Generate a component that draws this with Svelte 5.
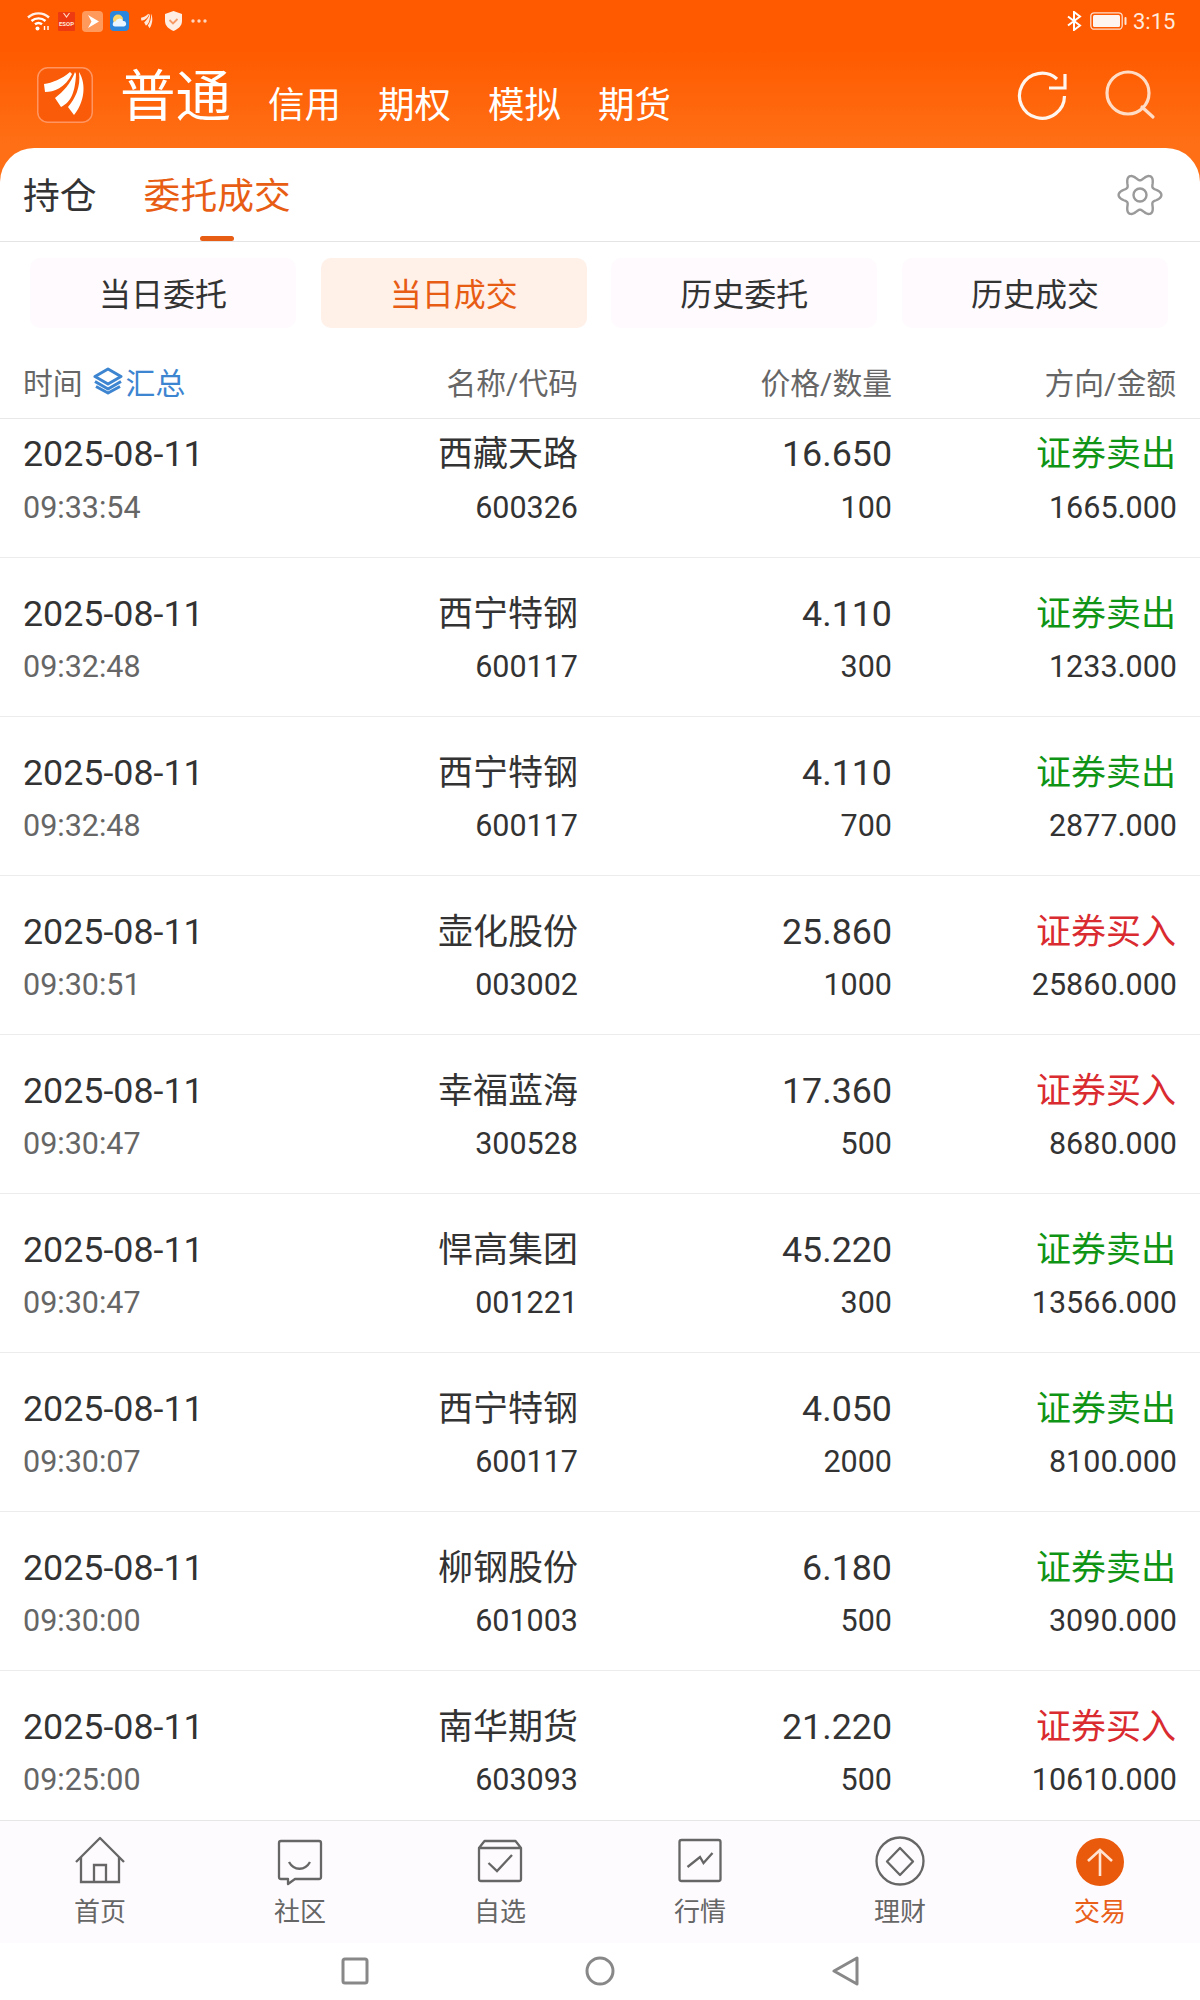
<script>
  const tabs = ['当日委托', '当日成交', '历史委托', '历史成交'];
  const rows = [
    ['09:33:54', '西藏天路', '600326', '16.650', '100', 'sell', '1665.000'],
    ['09:32:48', '西宁特钢', '600117', '4.110', '300', 'sell', '1233.000'],
    ['09:32:48', '西宁特钢', '600117', '4.110', '700', 'sell', '2877.000'],
    ['09:30:51', '壶化股份', '003002', '25.860', '1000', 'buy', '25860.000'],
    ['09:30:47', '幸福蓝海', '300528', '17.360', '500', 'buy', '8680.000'],
    ['09:30:47', '悍高集团', '001221', '45.220', '300', 'sell', '13566.000'],
    ['09:30:07', '西宁特钢', '600117', '4.050', '2000', 'sell', '8100.000'],
    ['09:30:00', '柳钢股份', '601003', '6.180', '500', 'sell', '3090.000'],
    ['09:25:00', '南华期货', '603093', '21.220', '500', 'buy', '10610.000']
  ];
  const navLabels = ['首页', '社区', '自选', '行情', '理财', '交易'];

  // Six-lobed settings gear outline, sampled around its centre.
  const gearPath = Array.from({ length: 120 }, (_, i) => {
    const a = (i / 120) * Math.PI * 2;
    const r = 18 + 3.4 * Math.cos(6 * a);
    const x = 23 + r * Math.cos(a);
    const y = 23 + r * Math.sin(a);
    return (i ? 'L' : 'M') + x.toFixed(2) + ' ' + y.toFixed(2);
  }).join('') + 'Z';
</script>

<div class="page">
  <header class="top">
    <div class="status">
      <div class="status-left">
        <svg width="24" height="20" viewBox="0 0 24 20" fill="none" stroke="#fff" stroke-width="2.4">
          <path d="M1 6.5C7 1 16 1 22 6.5" opacity=".9" />
          <path d="M4.5 10C8.5 6.5 14.5 6.5 18.5 10" />
          <path d="M8 13.3C10 11.7 13 11.7 15 13.3" />
          <circle cx="10.5" cy="17.5" r="2" fill="#fff" stroke="none" />
          <path d="M17.5 15v4M21 15v4" stroke-width="1.4" />
        </svg>
        <svg class="g-esop" width="17" height="20" viewBox="0 0 17 20">
          <rect width="17" height="19" y="1" rx="1" fill="#ee3a10" />
          <path d="M5.5 2L8.5 6l3-4" stroke="#ffd9c0" stroke-width="1.2" fill="none" />
          <text x="8.5" y="15" font-size="6" font-weight="700" text-anchor="middle" fill="#ffe8d8" font-family="Roboto">ESOP</text>
        </svg>
        <svg class="g-play" width="21" height="21" viewBox="0 0 21 21">
          <rect width="21" height="21" rx="4" fill="#ff9a5c" />
          <path d="M6 4l11 6.500L6 17l3.500-6.500z" fill="#fff" />
        </svg>
        <svg class="g-wx" width="19" height="20" viewBox="0 0 19 20">
          <rect width="19" height="20" rx="4" fill="#2c86dc" />
          <circle cx="8" cy="8.5" r="5" fill="#ffd768" />
          <path d="M5 15.5a2.500 2.500 0 0 1 .5-5 4 4 0 0 1 7.500-.5 2.800 2.800 0 0 1 1 5.500z" fill="#eaf5ff" />
        </svg>
        <svg class="g-leaf" width="16" height="19" viewBox="0 0 56 56" preserveAspectRatio="none" fill="#ffe8da">
          <path d="M33 5C25 12 15 16 7 17L8 25C17 25 28 21 35 7z" />
          <path d="M38 5C34 16 26 25 18 31L24 40C32 36 38 29 39 7z" />
          <path d="M42 5C50 18 47 36 37 48L31 40C38 32 44 20 42 5z" />
        </svg>
        <svg class="g-shield" width="17" height="20" viewBox="0 0 17 20">
          <path d="M8.5 0L17 3v7c0 5-4 8-8.500 10C4 18 0 15 0 10V3z" fill="#ffeee4" />
          <path d="M4.500 9L8 12.500l4.500-4.500" fill="none" stroke="#f59a66" stroke-width="1.8" />
        </svg>
        <svg class="g-dots" width="16" height="4" viewBox="0 0 16 4" fill="#fff" opacity=".75">
          <circle cx="2" cy="2" r="1.7" /><circle cx="8" cy="2" r="1.7" /><circle cx="14" cy="2" r="1.7" />
        </svg>
      </div>
      <div class="status-right">
        <svg width="15" height="20" viewBox="0 0 15 20" fill="none" stroke="#fff" stroke-width="2">
          <path d="M1 5.500l12 9-6 4.500V1l6 4.500-12 9" />
        </svg>
        <svg class="battery" width="37" height="18" viewBox="0 0 37 18">
          <rect x=".8" y=".8" width="31.4" height="16.4" rx="3.5" fill="none" stroke="#fff" stroke-width="1.3" opacity=".8" />
          <rect x="3" y="3" width="27" height="12" rx="1.5" fill="#fff5f0" />
          <rect x="34.5" y="5" width="2" height="8" rx="1" fill="#fff" opacity=".85" />
        </svg>
        <span class="clock">3:15</span>
      </div>
    </div>
    <div class="brand">
      <svg class="logo" width="56" height="56" viewBox="0 0 56 56">
        <rect x=".75" y=".75" width="54.5" height="54.5" rx="10" fill="#f95b08" stroke="#ff9560" stroke-width="1.5" />
        <path d="M33 5C25 12 15 16 7 17L8 25C17 25 28 21 35 7z" fill="#fff" />
        <path d="M38 5C34 16 26 25 18 31L24 40C32 36 38 29 39 7z" fill="#fff" />
        <path d="M42 5C50 18 47 36 37 48L31 40C38 32 44 20 42 5z" fill="#fff" />
      </svg>
      <span class="b-main">普通</span>
      <nav class="b-links">
        <span>信用</span><span>期权</span><span>模拟</span><span>期货</span>
      </nav>
      <div class="b-actions">
        <svg width="52" height="52" viewBox="0 0 52 52" fill="none" stroke="#fff6f0" stroke-width="3.2">
          <path d="M48.5 26A22.500 22.500 0 1 1 41 9" />
          <path d="M33 18h16V4" />
        </svg>
        <svg width="52" height="52" viewBox="0 0 52 52" fill="none" stroke="#ffdcc6" stroke-width="3.2">
          <circle cx="24" cy="23" r="21" />
          <path d="M38 37l11 10" stroke-linecap="round" />
        </svg>
      </div>
    </div>
  </header>

  <main class="sheet">
    <div class="main-tabs">
      <span class="mt">持仓</span>
      <span class="mt on">委托成交</span>
      <svg class="gear" width="46" height="46" viewBox="0 0 46 46" fill="none" stroke="#9a9a9a" stroke-width="2.4" stroke-linejoin="round">
        <path d={gearPath} />
        <circle cx="23" cy="23" r="6.5" />
      </svg>
    </div>

    <div class="sub-tabs">
      {#each tabs as t, i}
        <div class="st" class:active={i === 1}>{t}</div>
      {/each}
    </div>

    <div class="thead grid">
      <div class="th-time">
        <span>时间</span>
        <svg class="layers" width="30" height="28" viewBox="0 0 30 28" fill="none" stroke="#3d85d0" stroke-width="3" stroke-linejoin="round">
          <path d="M15 2L28 9.500 15 17 2 9.500z" />
          <path d="M2 14.500L15 22l13-7.500" />
          <path d="M3 19.500L15 26l12-6.500" />
        </svg>
        <span class="sum">汇总</span>
      </div>
      <div class="r">名称/代码</div>
      <div class="r">价格/数量</div>
      <div class="r dir-head">方向/金额</div>
    </div>

    <div class="list">
      {#each rows as r, i}
        <div class="row grid" class:first={i === 0}>
          <div class="cell">
            <div class="l1">2025-08-11</div>
            <div class="l2 muted">{r[0]}</div>
          </div>
          <div class="cell r">
            <div class="l1 cjk">{r[1]}</div>
            <div class="l2">{r[2]}</div>
          </div>
          <div class="cell r">
            <div class="l1">{r[3]}</div>
            <div class="l2">{r[4]}</div>
          </div>
          <div class="cell r">
            <div class="l1 cjk {r[5]}">{r[5] === 'sell' ? '证券卖出' : '证券买入'}</div>
            <div class="l2">{r[6]}</div>
          </div>
        </div>
      {/each}
    </div>
  </main>

  <nav class="bottom">
    {#each navLabels as label, i}
      <div class="nav-item" class:cur={i === 5}>
        <svg width="52" height="52" viewBox="0 0 52 52" fill="none" stroke="#666" stroke-width="2.3">
          {#if i === 0}
            <path d="M2 27L26 3l24 24" stroke-linejoin="round" />
            <path d="M7 22v25h38V22M20 47V30h12v17" />
          {:else if i === 1}
            <path d="M7 6h38a2 2 0 0 1 2 2v34a2 2 0 0 1-2 2H21l-7 5v-5H7a2 2 0 0 1-2-2V8a2 2 0 0 1 2-2z" stroke-linejoin="round" />
            <path d="M15 27c5 9 16 9 21 0" />
          {:else if i === 2}
            <path d="M5 13h42v31a2 2 0 0 1-2 2H7a2 2 0 0 1-2-2zM5 13l5.500-7h31l5.500 7" stroke-linejoin="round" />
            <path d="M14.5 28l8.500 8 15-16" />
          {:else if i === 3}
            <rect x="5.5" y="5" width="41" height="41" rx="2" />
            <path d="M13.5 32L26 22l3.500 6 9-10" />
          {:else if i === 4}
            <circle cx="26" cy="26" r="23.5" />
            <path d="M26 13l13 13.500L26 40 13 26.500z" stroke-linejoin="round" />
          {:else}
            <circle cx="26" cy="27" r="24" fill="#ea5a0c" stroke="none" />
            <path d="M26 41V15M14 26l12-11 12 11" stroke="#ffe3d2" stroke-width="2.6" />
          {/if}
        </svg>
        <span>{label}</span>
      </div>
    {/each}
  </nav>

  <div class="sysbar">
    <svg width="28" height="28" viewBox="0 0 28 28" fill="none" stroke="#888" stroke-width="3"><rect x="2" y="2" width="24" height="24" rx="2" /></svg>
    <svg width="30" height="30" viewBox="0 0 30 30" fill="none" stroke="#888" stroke-width="3"><circle cx="15" cy="15" r="13" /></svg>
    <svg width="28" height="30" viewBox="0 0 28 30" fill="none" stroke="#888" stroke-width="3" stroke-linejoin="round"><path d="M2 15L25 2v26z" /></svg>
  </div>
</div>

<style>
  :global(body) { margin: 0; background: #fff; }
  .page {
    width: 1200px;
    height: 2000px;
    display: flex;
    flex-direction: column;
    overflow: hidden;
    font-family: Roboto, "Noto Sans CJK SC", sans-serif;
    color: #333;
    background: linear-gradient(180deg, #ff5a00 0, #ff5a00 50px, #ff7016 148px, #ff7016 200px);
  }
  svg { display: block; flex: none; }

  .top { height: 148px; flex: none; }
  .status { height: 42px; display: flex; justify-content: space-between; align-items: center; padding: 0 26px 0 27px; }
  .status-left, .status-right { display: flex; align-items: center; height: 42px; }
  .g-esop, .g-play, .g-wx { margin-left: 7px; }
  .g-leaf, .g-shield { margin-left: 10px; }
  .g-dots { margin-left: 9px; }
  .battery { margin-left: 8px; }
  .clock { margin-left: 6px; font-size: 22px; color: #ffeadd; width: 41px; text-align: right; }

  .brand { display: flex; align-items: flex-start; padding: 25px 0 0 37px; height: 81px; }
  .b-main { margin-left: 27px; font-size: 55.5px; line-height: 60px; color: #fff; margin-top: 1px; }
  .b-links { display: flex; gap: 37px; margin-left: 37px; margin-top: 16px; font-size: 36.5px; line-height: 46px; color: #fff; }
  .b-actions { display: flex; margin-left: auto; gap: 36px; padding-right: 44px; margin-top: 3px; }

  .sheet {
    flex: 1;
    min-height: 0;
    display: flex;
    flex-direction: column;
    background: #fff;
    border-radius: 34px 34px 0 0;
  }

  .main-tabs { height: 94px; flex: none; box-sizing: border-box; border-bottom: 1px solid #e4e4e4; display: flex; align-items: flex-start; padding-left: 23px; }
  .mt { font-size: 36.8px; line-height: 48px; margin-top: 25px; margin-right: 47px; color: #333; position: relative; height: 68px; }
  .mt.on { color: #e85d14; }
  .mt.on::after { content: ''; position: absolute; left: 56px; bottom: 0; width: 34px; height: 5px; border-radius: 3px; background: #e85d14; }
  .gear { margin-left: auto; margin-right: 37px; margin-top: 24px; }

  .sub-tabs { height: 86px; flex: none; box-sizing: border-box; padding: 16px 32px 0 30px; display: flex; justify-content: space-between; }
  .st { width: 266px; height: 70px; line-height: 74px; text-align: center; font-size: 32px; color: #333; background: #fefafd; border-radius: 10px; }
  .st.active { background: #fff0e8; color: #e85d14; }

  .grid { display: grid; grid-template-columns: 275px 280px 314px 285px; padding: 0 23px; }
  .r { text-align: right; }
  .dir-head { padding-right: 1px; }

  .thead { height: 91px; flex: none; box-sizing: border-box; border-bottom: 1px solid #e8e8e8; align-items: center; font-size: 29.8px; color: #666; padding-top: 15px; }
  .th-time { display: flex; align-items: center; }
  .layers { margin-left: 10px; }
  .sum { margin-left: 3px; color: #3d85d0; }

  .list { flex: 1; min-height: 0; overflow: hidden; }
  .row { height: 159px; box-sizing: border-box; border-bottom: 1px solid #ececec; padding-top: 30px; }
  .row.first { height: 139px; padding-top: 9px; }
  .l1 { height: 52px; line-height: 52px; font-size: 35.8px; color: #333; white-space: nowrap; }
  .l1.cjk { font-size: 35px; line-height: 54px; }
  .l2 { height: 54px; line-height: 54px; font-size: 30.5px; color: #333; white-space: nowrap; }
  .row.first .l2 { padding-top: 1px; }
  .muted { color: #666; }
  .l1.sell, .l1.buy { padding-right: 1px; }
  .l1.sell { color: #0f9415; }
  .l1.buy { color: #d92b30; }

  .bottom { height: 123px; flex: none; box-sizing: border-box; border-top: 1px solid #e6e6e6; background: #fefbfe; display: flex; }
  .nav-item { width: 200px; display: flex; flex-direction: column; align-items: center; padding-top: 14px; font-size: 26px; line-height: 34px; color: #666; }
  .nav-item span { margin-top: 8px; }
  .nav-item.cur { color: #e8601a; }

  .sysbar { height: 57px; flex: none; background: #fff; display: flex; align-items: center; padding-bottom: 2px; box-sizing: border-box; }
  .sysbar svg:nth-child(1) { margin-left: 341px; }
  .sysbar svg:nth-child(2) { margin-left: 216px; }
  .sysbar svg:nth-child(3) { margin-left: 217px; }
</style>
